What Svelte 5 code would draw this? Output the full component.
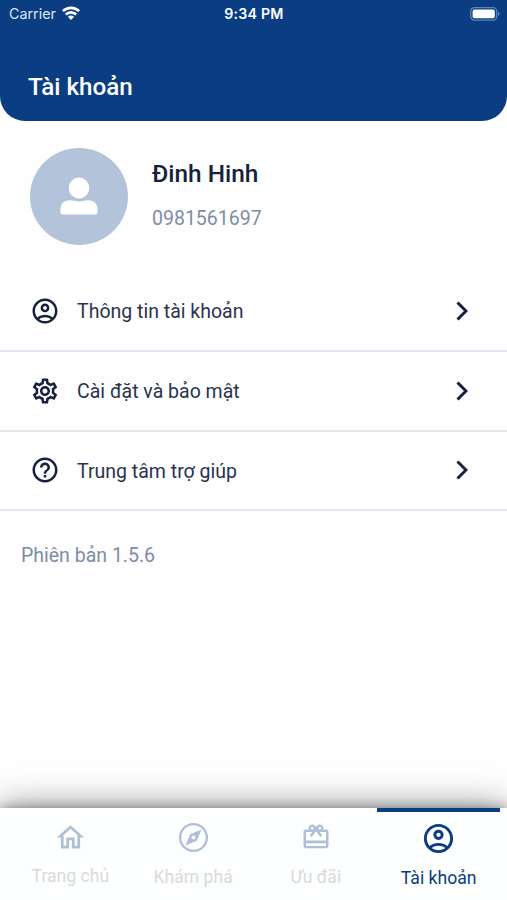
<script lang="ts">
  const icons: Record<string, string> = {
    account:
      "M12 2C6.48 2 2 6.48 2 12s4.48 10 10 10 10-4.48 10-10S17.52 2 12 2zM7.35 18.5C8.66 17.56 10.26 17 12 17s3.34.56 4.65 1.5C15.34 19.44 13.74 20 12 20s-3.34-.56-4.65-1.5zm10.79-1.38C16.45 15.8 14.32 15 12 15s-4.45.8-6.14 2.12C4.7 15.73 4 13.95 4 12c0-4.42 3.58-8 8-8s8 3.58 8 8c0 1.95-.7 3.73-1.86 5.12zM12 6c-1.93 0-3.5 1.57-3.5 3.5S10.07 13 12 13s3.5-1.57 3.5-3.5S13.93 6 12 6zm0 5c-.83 0-1.5-.67-1.5-1.5S11.17 8 12 8s1.5.67 1.5 1.5S12.83 11 12 11z",
    settings:
      "M19.43 12.98c.04-.32.07-.64.07-.98 0-.34-.03-.66-.07-.98l2.11-1.65c.19-.15.24-.42.12-.64l-2-3.46c-.09-.16-.26-.25-.44-.25-.06 0-.12.01-.17.03l-2.49 1c-.52-.4-1.08-.73-1.69-.98l-.38-2.65C14.46 2.18 14.25 2 14 2h-4c-.25 0-.46.18-.49.42l-.38 2.65c-.61.25-1.17.59-1.69.98l-2.49-1c-.06-.02-.12-.03-.18-.03-.17 0-.34.09-.43.25l-2 3.46c-.13.22-.07.49.12.64l2.11 1.65c-.04.32-.07.65-.07.98 0 .33.03.66.07.98l-2.11 1.65c-.19.15-.24.42-.12.64l2 3.46c.09.16.26.25.44.25.06 0 .12-.01.17-.03l2.49-1c.52.4 1.08.73 1.69.98l.38 2.65c.03.24.24.42.49.42h4c.25 0 .46-.18.49-.42l.38-2.65c.61-.25 1.17-.59 1.69-.98l2.49 1c.06.02.12.03.18.03.17 0 .34-.09.43-.25l2-3.46c.12-.22.07-.49-.12-.64l-2.11-1.65zm-1.98-1.71c.04.31.05.52.05.73 0 .21-.02.43-.05.73l-.14 1.13.89.7 1.08.84-.7 1.21-1.27-.51-1.04-.42-.9.68c-.43.32-.84.56-1.25.73l-1.06.43-.16 1.13-.2 1.35h-1.4l-.19-1.35-.16-1.13-1.06-.43c-.43-.18-.83-.41-1.23-.71l-.91-.7-1.06.43-1.27.51-.7-1.21 1.08-.84.89-.7-.14-1.13c-.03-.31-.05-.54-.05-.74s.02-.43.05-.73l.14-1.13-.89-.7-1.08-.84.7-1.21 1.27.51 1.04.42.9-.68c.43-.32.84-.56 1.25-.73l1.06-.43.16-1.13.2-1.35h1.39l.19 1.35.16 1.13 1.06.43c.43.18.83.41 1.23.71l.91.7 1.06-.43 1.27-.51.7 1.21-1.07.85-.89.7.14 1.13zM12 8c-2.21 0-4 1.79-4 4s1.79 4 4 4 4-1.79 4-4-1.79-4-4-4zm0 6c-1.1 0-2-.9-2-2s.9-2 2-2 2 .9 2 2-.9 2-2 2z",
    help: "M11 18h2v-2h-2v2zm1-16C6.48 2 2 6.48 2 12s4.48 10 10 10 10-4.48 10-10S17.52 2 12 2zm0 18c-4.41 0-8-3.59-8-8s3.59-8 8-8 8 3.59 8 8-3.59 8-8 8zm0-14c-2.21 0-4 1.79-4 4h2c0-1.1.9-2 2-2s2 .9 2 2c0 2-3 1.75-3 5h2c0-2.25 3-2.5 3-5 0-2.21-1.79-4-4-4z",
    home: "M12 5.69l5 4.5V18h-2v-6H9v6H7v-7.81l5-4.5M12 3L2 12h3v8h6v-6h2v6h6v-8h3L12 3z",
    explore:
      "M12 2C6.48 2 2 6.48 2 12s4.48 10 10 10 10-4.48 10-10S17.52 2 12 2zm0 18.4c-4.64 0-8.4-3.76-8.4-8.4s3.76-8.4 8.4-8.4 8.4 3.76 8.4 8.4-3.76 8.4-8.4 8.4zm-5.5-2.9l7.8-3.2L17.5 6.5 9.7 9.7 6.5 17.5zM12 10.7c.7 0 1.3.6 1.3 1.3s-.6 1.3-1.3 1.3-1.3-.6-1.3-1.3.6-1.3 1.3-1.3z",
    gift: "M20 6h-2.18c.11-.31.18-.65.18-1 0-1.66-1.34-3-3-3-1.05 0-1.96.54-2.5 1.35l-.5.67-.5-.68C10.96 2.54 10.05 2 9 2 7.34 2 6 3.34 6 5c0 .35.07.69.18 1H4c-1.11 0-1.99.89-1.99 2L2 19c0 1.11.89 2 2 2h16c1.11 0 2-.89 2-2V8c0-1.11-.89-2-2-2zm-5-2c.55 0 1 .45 1 1s-.45 1-1 1-1-.45-1-1 .45-1 1-1zM9 4c.55 0 1 .45 1 1s-.45 1-1 1-1-.45-1-1 .45-1 1-1zm11 15.2H4v-2.2h16v2.2zm0-4.5H4V8h5.08L7 10.83 8.62 12 12 7.4l3.38 4.6L17 10.83 14.92 8H20v6.7z",
  };

  const menu = [
    { icon: "account", label: "Thông tin tài khoản" },
    { icon: "settings", label: "Cài đặt và bảo mật" },
    { icon: "help", label: "Trung tâm trợ giúp" },
  ];

  const tabs = [
    { id: "home", icon: "home", label: "Trang chủ" },
    { id: "explore", icon: "explore", label: "Khám phá" },
    { id: "offers", icon: "gift", label: "Ưu đãi" },
    { id: "profile-tab", icon: "account", label: "Tài khoản" },
  ];

  let active = $state(3);
</script>

<div class="screen">
  <header>
    <div class="status">
      <div class="carrier">
        <span>Carrier</span>
        <svg class="wifi" viewBox="0 0 18 14" fill="none" stroke="#fff" stroke-width="2.6">
          <path d="M0.9 5.2a11.5 11.5 0 0 1 16.2 0" />
          <path d="M3.8 8.5a7.4 7.4 0 0 1 10.4 0" />
          <path d="M9 13.9L5.9 10.8a4.3 4.3 0 0 1 6.2 0z" fill="#fff" stroke="none" />
        </svg>
      </div>
      <span class="time">9:34 PM</span>
      <svg class="battery" viewBox="0 0 30 14">
        <rect x="0.7" y="0.7" width="26" height="12.4" rx="3.6" fill="none" stroke="#6383b4" stroke-width="1.3" />
        <rect x="2.6" y="2.6" width="22.2" height="8.6" rx="1.8" fill="#fff" />
        <path d="M28 4.8c2 .7 2 3.5 0 4.2z" fill="#6383b4" />
      </svg>
    </div>
    <h1>Tài khoản</h1>
  </header>

  <section class="profile">
    <div class="avatar">
      <svg viewBox="0 0 38 38" fill="#fff">
        <circle cx="19" cy="11" r="10.4" />
        <path d="M.5 35.2v-2.7C.5 27 4 23.3 9.5 23.3c3.500 0 5.500 1.200 9.500 1.200s6-1.200 9.500-1.200c5.500 0 9 3.700 9 9.200v2.700a2.300 2.300 0 0 1-2.300 2.300H2.800A2.300 2.300 0 0 1 .5 35.200z" />
      </svg>
    </div>
    <div class="who">
      <h2>Đinh Hinh</h2>
      <p>0981561697</p>
    </div>
  </section>

  <ul class="menu">
    {#each menu as item}
      <li>
        <svg class="icon" viewBox="0 0 24 24"><path d={icons[item.icon]} /></svg>
        <span>{item.label}</span>
        <svg class="chevron" viewBox="0 0 12 20"><path d="M1.5 1.5L10 10l-8.5 8.5" /></svg>
      </li>
    {/each}
  </ul>

  <p class="version">Phiên bản 1.5.6</p>

  <nav>
    {#each tabs as tab, i}
      <button class="tab {tab.id}" class:active={active === i} onclick={() => (active = i)}>
        <svg viewBox="0 0 24 24"><path d={icons[tab.icon]} /></svg>
        <span>{tab.label}</span>
      </button>
    {/each}
  </nav>
</div>

<style>
  :global(body) {
    background: #fefefe;
  }
  .screen {
    height: 900px;
    display: flex;
    flex-direction: column;
    overflow: hidden;
    font-family: Roboto, "Noto Sans", sans-serif;
    color: #16213f;
    background: #fefefe;
  }
  h1,
  h2,
  p,
  ul {
    margin: 0;
    padding: 0;
    font-weight: 500;
  }
  header {
    height: 121px;
    flex: none;
    background: #0a3d82;
    border-radius: 0 0 25px 25px;
    color: #fff;
  }
  .status {
    display: grid;
    grid-template-columns: 1fr auto 1fr;
    align-items: center;
    height: 27px;
    padding: 0 7px 0 9px;
    font-family: Inter, sans-serif;
    font-size: 14.3px;
  }
  .carrier {
    display: flex;
    align-items: center;
    gap: 6px;
    color: #dce6f3;
  }
  .wifi {
    width: 18px;
    height: 14px;
    margin-top: -2px;
  }
  .time {
    font-weight: 600;
    font-size: 14.2px;
    letter-spacing: 0.2px;
    margin-right: 1px;
  }
  .battery {
    width: 30px;
    height: 14px;
    justify-self: end;
  }
  h1 {
    margin: 44px 0 0 28px;
    font-size: 24.2px;
    line-height: 32px;
  }
  .profile {
    display: flex;
    gap: 24px;
    padding: 27px 30px 0;
  }
  .avatar {
    width: 98px;
    height: 97px;
    border-radius: 50%;
    background: #b3c3d9;
    display: flex;
    align-items: center;
    justify-content: center;
  }
  .avatar svg {
    width: 38px;
    height: 38px;
    margin-top: -1px;
  }
  .who {
    padding-top: 10px;
  }
  h2 {
    font-size: 24.4px;
    line-height: 32px;
  }
  .who p {
    margin-top: 15px;
    font-size: 19.5px;
    line-height: 28px;
    font-weight: 400;
    color: #7f8ca6;
  }
  .menu {
    margin-top: 27px;
    list-style: none;
  }
  .menu li {
    box-sizing: border-box;
    height: 79.8px;
    display: flex;
    align-items: center;
    padding: 0 39px 0 30px;
    border-bottom: 2px solid #dfe6f1;
    font-size: 19.5px;
    font-weight: 400;
    color: #2a3350;
  }
  .menu li:nth-child(2) {
    border-bottom-color: #e6e8ec;
  }
  .icon {
    width: 30px;
    height: 30px;
    margin-right: 17px;
    fill: #16213f;
  }
  .menu span {
    flex: 1;
    padding-top: 2px;
  }
  .chevron {
    width: 12px;
    height: 20px;
    fill: none;
    stroke: #16213f;
    stroke-width: 3;
  }
  .version {
    margin: 31px 0 0 21px;
    font-size: 19.5px;
    line-height: 28px;
    font-weight: 400;
    color: #7f8ca6;
  }
  nav {
    box-sizing: border-box;
    height: 92px;
    margin-top: auto;
    display: grid;
    grid-template-columns: repeat(4, 1fr);
    padding: 0 7px 0 9px;
    background: #fdfefe;
    box-shadow:
      0 0 10px rgba(0, 0, 0, 0.3),
      0 0 34px rgba(0, 0, 0, 0.5);
  }
  .tab {
    display: flex;
    flex-direction: column;
    align-items: center;
    padding: 8px 0 0;
    border: 0;
    border-top: 4px solid transparent;
    background: none;
    font: 400 17.6px/24px Roboto, "Noto Sans", sans-serif;
    color: #dadada;
  }
  .tab svg {
    width: 35px;
    height: 35px;
    fill: #b0bfd8;
  }
  .tab span {
    margin-top: 10px;
  }
  .home {
    padding-top: 9px;
  }
  .home svg {
    width: 33px;
    height: 33px;
  }
  .offers {
    padding-top: 10px;
  }
  .offers svg {
    width: 30px;
    height: 30px;
  }
  .offers span {
    margin-top: 13px;
  }
  .profile-tab {
    padding-top: 9px;
  }
  .tab.active {
    border-top-color: #0a3d82;
    color: #0a3d82;
  }
  .tab.active svg {
    fill: #0a3d82;
  }
</style>
